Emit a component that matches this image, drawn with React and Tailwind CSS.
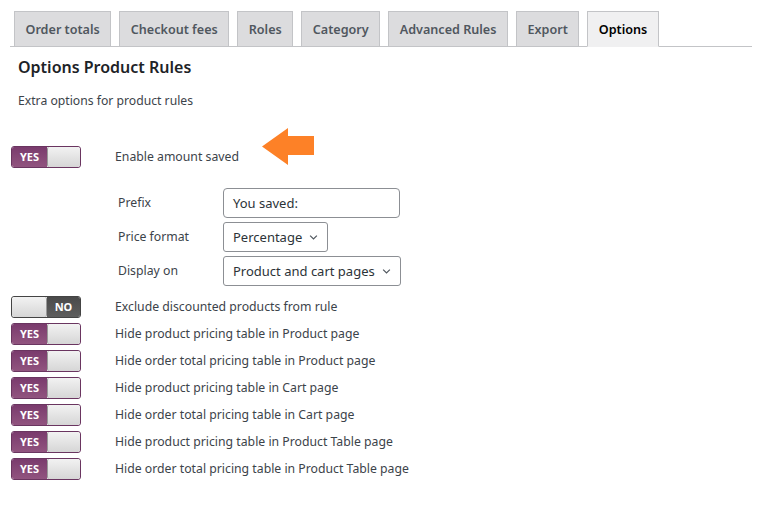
import React from "react";

const tabs = ["Order totals", "Checkout fees", "Roles", "Category", "Advanced Rules", "Export", "Options"];

function Toggle({ on }) {
  if (on) {
    return (
      <div className="flex h-[22px] w-[70px] shrink-0 overflow-hidden rounded-[3px] border border-[#6a3560]">
        <div className="flex w-[35px] items-center justify-center bg-gradient-to-b from-[#7a3b6d] to-[#91547f] text-[11px] font-bold text-white">
          YES
        </div>
        <div className="flex-1 rounded-[2px] border-l border-[#999] bg-gradient-to-b from-[#f2f2f2] to-[#d6d6d6]" />
      </div>
    );
  }
  return (
    <div className="flex h-[22px] w-[70px] shrink-0 overflow-hidden rounded-[3px] border border-[#444]">
      <div className="w-[35px] rounded-[2px] border-r border-[#999] bg-gradient-to-b from-[#f2f2f2] to-[#d6d6d6]" />
      <div className="flex flex-1 items-center justify-center bg-gradient-to-b from-[#4a4a4a] to-[#5e5e5e] text-[11px] font-bold text-white">
        NO
      </div>
    </div>
  );
}

function Row({ on, label }) {
  return (
    <div className="flex h-[27px] items-center">
      <div className="w-[115px] pl-[11px]">
        <Toggle on={on} />
      </div>
      <span>{label}</span>
    </div>
  );
}

function Chevron() {
  return (
    <svg width="9" height="9" viewBox="0 0 12 12" className="ml-[7px]">
      <path d="M1.5 3.5 L6 8 L10.5 3.5" fill="none" stroke="#50575e" strokeWidth="1.6" />
    </svg>
  );
}

export default function App() {
  const rows = [
    [false, "Exclude discounted products from rule"],
    [true, "Hide product pricing table in Product page"],
    [true, "Hide order total pricing table in Product page"],
    [true, "Hide product pricing table in Cart page"],
    [true, "Hide order total pricing table in Cart page"],
    [true, "Hide product pricing table in Product Table page"],
    [true, "Hide order total pricing table in Product Table page"],
  ];
  return (
    <div className="h-[505px] w-[766px] bg-white text-[12.25px] text-[#3c434a]" style={{ fontFamily: '"Noto Sans", "Open Sans", sans-serif' }}>
      <div className="ml-[10px] mr-[14px] flex gap-[8px] border-b border-[#c3c4c7] pl-[4px] pt-[11px]">
        {tabs.map((t) => {
          const active = t === "Options";
          return (
            <div
              key={t}
              className={`-mb-px flex h-[36px] items-center border border-[#c3c4c7] px-[10.5px] pt-[2px] text-[12.6px] font-semibold ${
                active ? "border-b-[#f0f0f1] bg-[#f0f0f1] text-black" : "bg-[#dcdcde] text-[#50575e]"
              }`}
            >
              {t}
            </div>
          );
        })}
      </div>
      <div className="pl-[18px] pt-[8px] text-[16px] font-semibold text-[#1d2327]">Options Product Rules</div>
      <div className="pl-[18px] pt-[13px] text-[12.2px]">Extra options for product rules</div>

      <div className="mt-[33px] flex h-[27px] items-center">
        <div className="w-[115px] pl-[11px]">
          <Toggle on />
        </div>
        <span>Enable amount saved</span>
        <svg width="52" height="37" viewBox="0 0 52 37" className="ml-[23px] -mt-[20px]">
          <polygon points="0,18.5 26,0 26,8 52,8 52,27 26,27 26,37" fill="#fd8127" />
        </svg>
      </div>

      <div className="mt-[18px] flex flex-col gap-[4px] pl-[118px]">
        <div className="flex items-center">
          <span className="w-[105px]">Prefix</span>
          <div className="flex h-[30px] w-[177px] items-center rounded-[4px] border border-[#8c8f94] px-[9px] text-[13px] text-[#2c3338]">
            You saved:
          </div>
        </div>
        <div className="flex items-center">
          <span className="w-[105px]">Price format</span>
          <div className="flex h-[30px] items-center rounded-[3px] border border-[#8c8f94] pl-[9px] pr-[9px] text-[13px] text-[#2c3338]">
            Percentage
            <Chevron />
          </div>
        </div>
        <div className="flex items-center">
          <span className="w-[105px]">Display on</span>
          <div className="flex h-[30px] items-center rounded-[3px] border border-[#8c8f94] pl-[9px] pr-[9px] text-[13px] text-[#2c3338]">
            Product and cart pages
            <Chevron />
          </div>
        </div>
      </div>

      <div className="mt-[7px]">
        {rows.map(([on, label], i) => (
          <Row key={i} on={on} label={label} />
        ))}
      </div>
    </div>
  );
}
